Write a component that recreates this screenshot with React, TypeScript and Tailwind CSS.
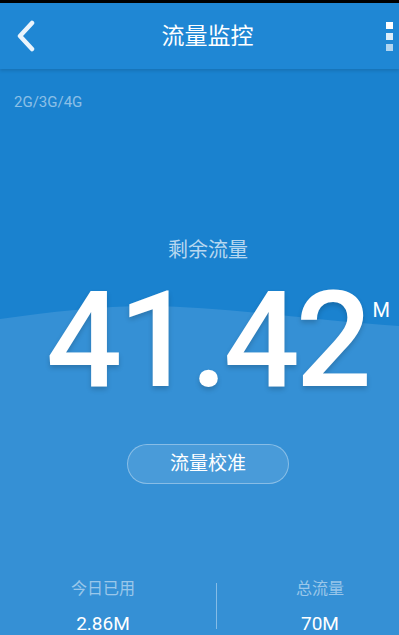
import React from "react";

export default function App() {
  const roboto = { fontFamily: "Roboto, 'Noto Sans CJK SC', sans-serif" } as React.CSSProperties;
  return (
    <div
      className="relative w-[399px] h-[635px] overflow-hidden bg-[#1a82cf] flex flex-col"
      style={roboto}
    >
      {/* wave background */}
      <svg
        className="absolute left-0 top-0"
        width="399"
        height="635"
        viewBox="0 0 399 635"
      >
        <path
          d="M0 319 C 50 312, 100 306, 150 306 C 230 307, 320 321, 399 326 L399 635 L0 635 Z"
          fill="#3590d5"
        />
      </svg>

      <div className="h-[3px] bg-black relative z-10" />
      <header className="relative z-10 h-[66px] bg-[#1f87d4] flex items-center shadow-[0_2px_3px_rgba(0,0,0,0.12)]">
        <div className="w-[50px] flex justify-center pl-[2px]">
          <svg width="22" height="32" viewBox="0 0 22 32">
            <path
              d="M17 3 L5 16 L17 29"
              fill="none"
              stroke="#eaf4fc"
              strokeWidth="4.5"
              strokeLinecap="round"
              strokeLinejoin="round"
            />
          </svg>
        </div>
        <div className="flex-1 text-center text-white text-[23px] leading-none pl-[16px]">
          流量监控
        </div>
        <div className="w-[50px] flex justify-end pr-[6px]">
          <div className="flex flex-col gap-[4px]">
            <div className="w-[7px] h-[7px] bg-white" />
            <div className="w-[7px] h-[7px] bg-white/85" />
            <div className="w-[7px] h-[7px] bg-white/65" />
          </div>
        </div>
      </header>

      <div className="relative z-0 flex flex-col flex-1">
        <div className="pl-[14px] pt-[25px] text-[15px] leading-[16px] text-white/50">
          2G/3G/4G
        </div>

        <div className="mt-[128px] text-center text-[20px] leading-[24px] text-white/70 pl-[17px]">
          剩余流量
        </div>

        <div className="mt-[12px] flex justify-center pl-[15px]">
          <div className="relative">
            <div className="text-[134px] leading-[134px] font-medium tracking-[-4px] text-white [text-shadow:0_3px_5px_rgba(0,0,0,0.18)]">
              41.42
            </div>
            <div className="absolute right-[-22px] top-[26px] text-[20px] leading-none text-white">
              M
            </div>
          </div>
        </div>

        <div className="mt-[36px] flex justify-center pl-[17px]">
          <div className="w-[162px] h-[40px] rounded-full border border-white/35 bg-white/10 flex items-center justify-center text-white text-[19px]">
            流量校准
          </div>
        </div>

        <div className="mt-[95px] flex items-start">
          <div className="w-[206px] flex flex-col items-center">
            <div className="text-[16px] leading-[20px] text-white/50">今日已用</div>
            <div className="mt-[14px] text-[19px] leading-[22px] text-white">2.86M</div>
          </div>
          <div className="ml-[10px] mt-[4px] w-[1px] h-[46px] bg-white/40" />
          <div className="flex-1 flex flex-col items-center pl-[24px]">
            <div className="text-[16px] leading-[20px] text-white/50">总流量</div>
            <div className="mt-[14px] text-[19px] leading-[22px] text-white">70M</div>
          </div>
        </div>
      </div>
    </div>
  );
}
